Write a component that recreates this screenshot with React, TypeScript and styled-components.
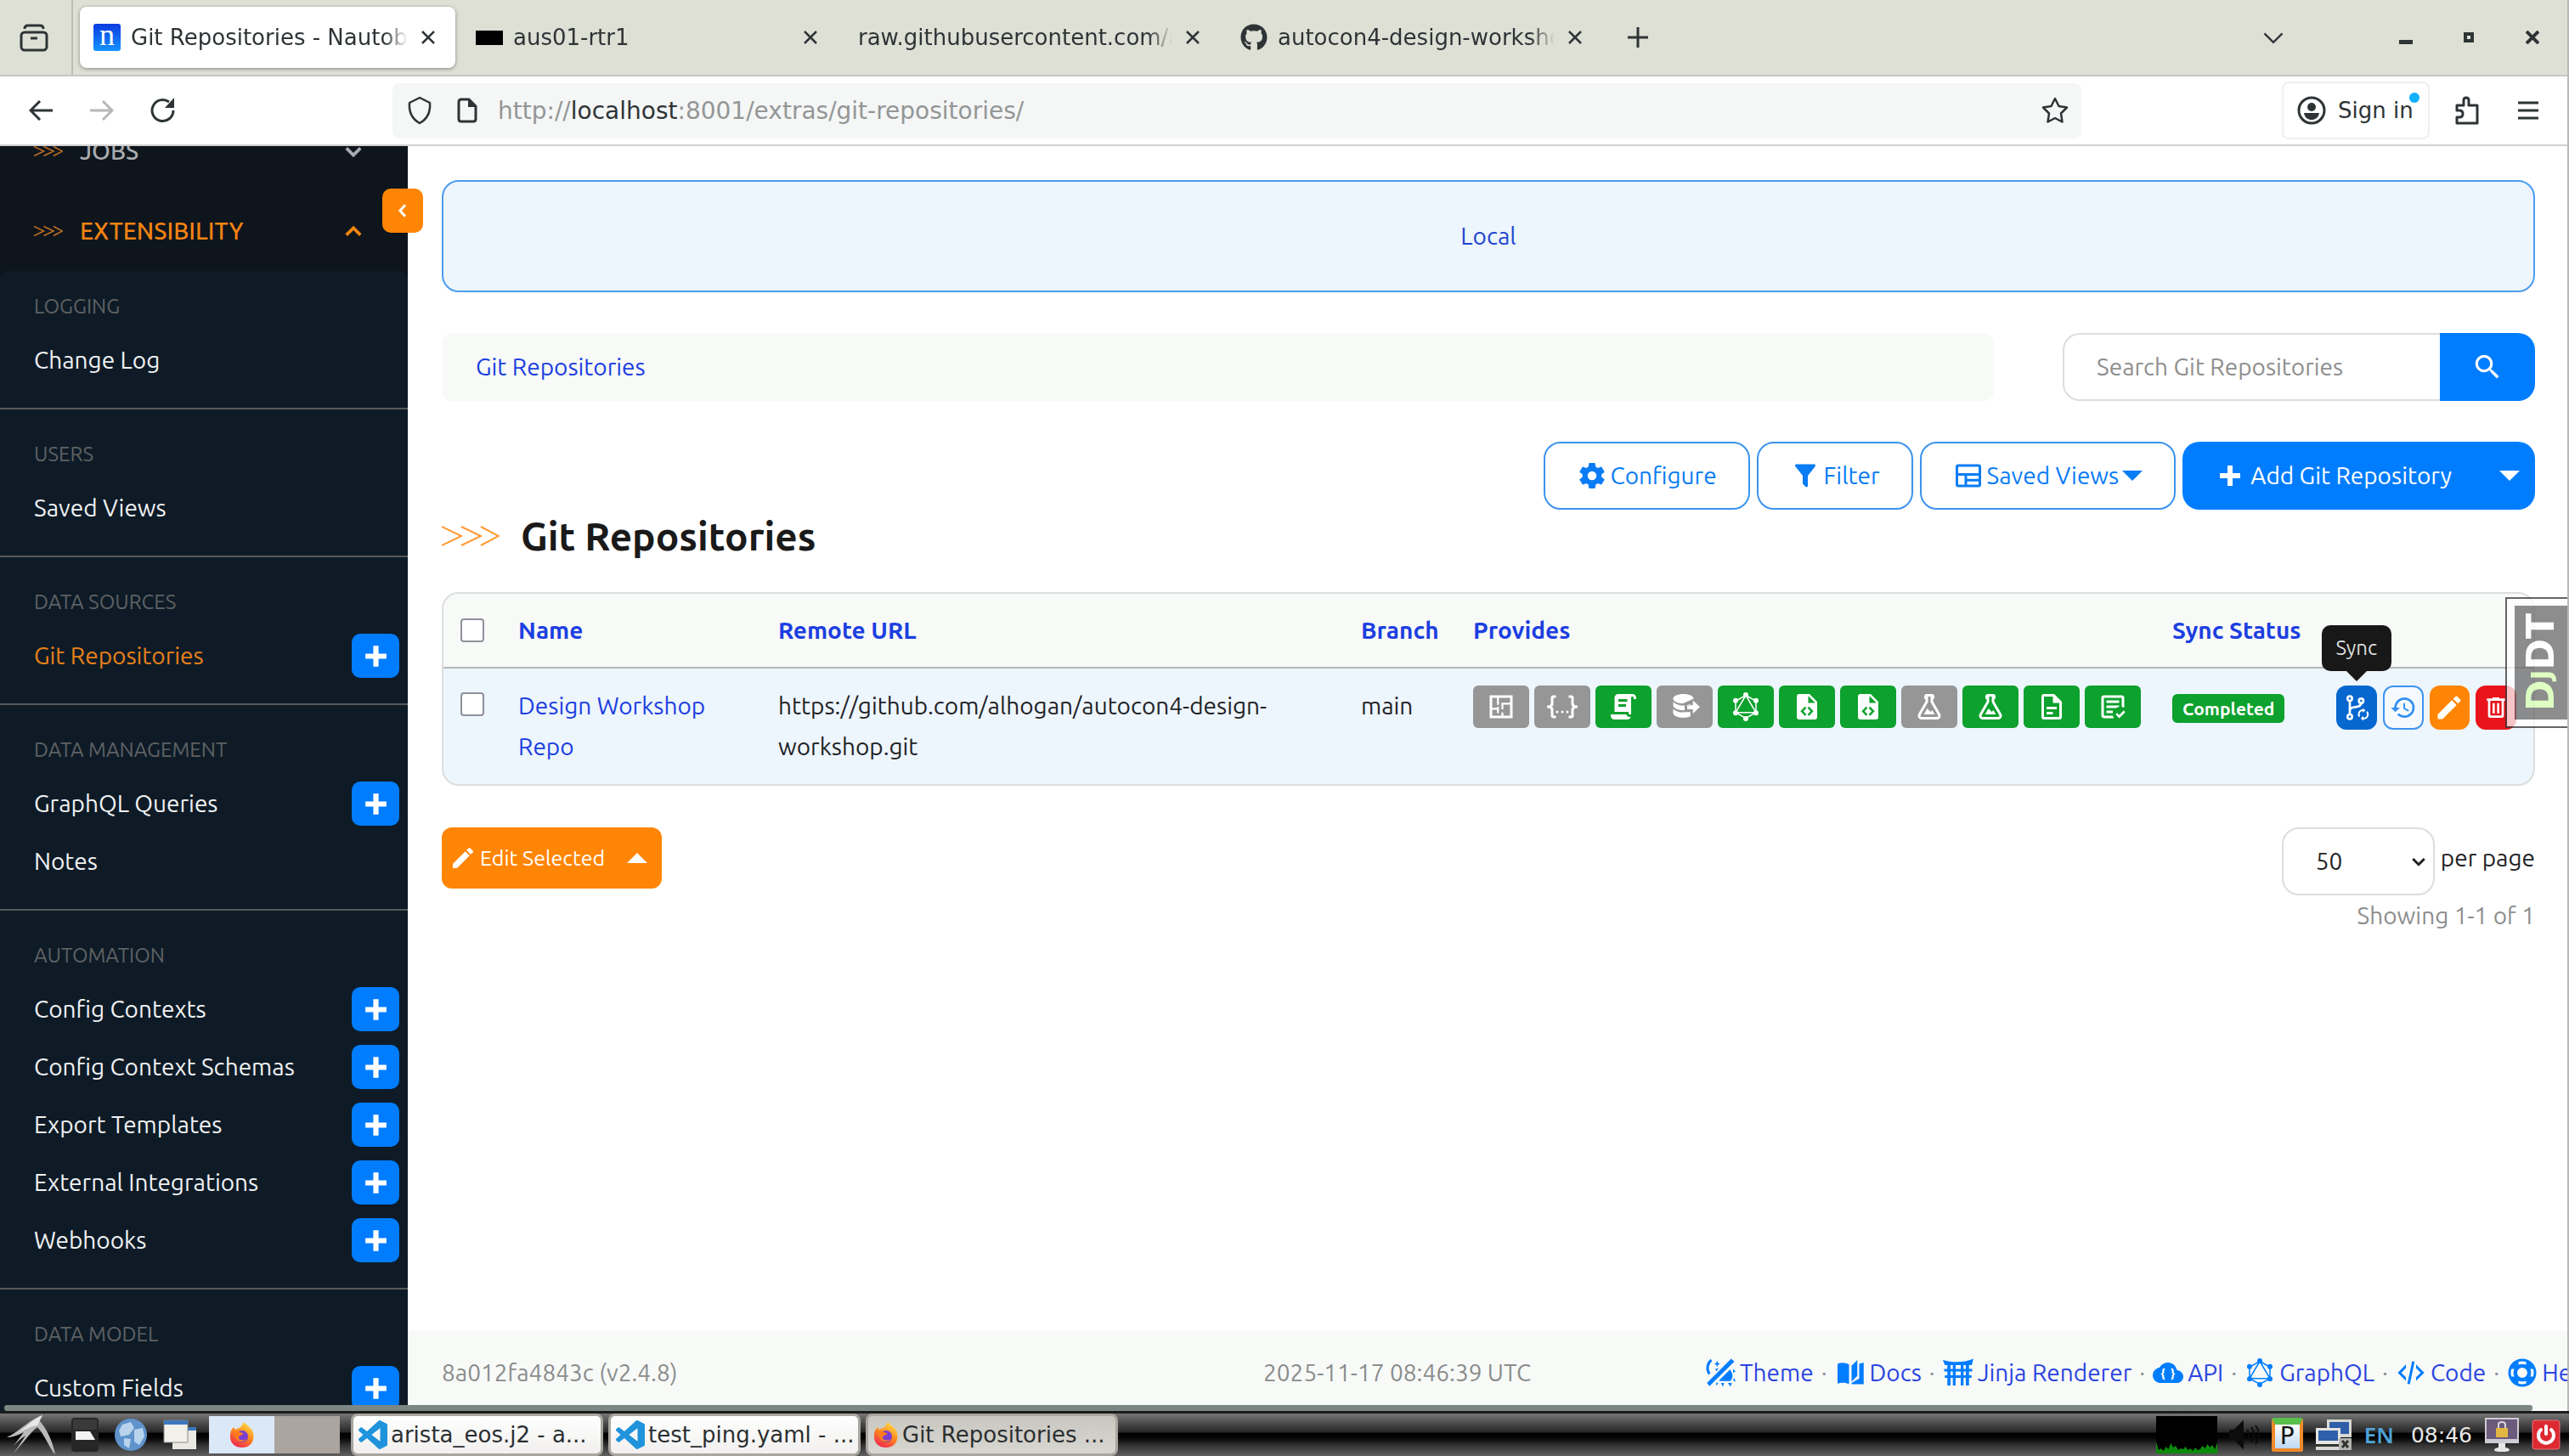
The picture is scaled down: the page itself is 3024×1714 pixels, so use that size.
import React from 'react';
import styled, { createGlobalStyle } from 'styled-components';
import { FaGithub } from 'react-icons/fa';

const PAGE_FONT = '"Ubuntu", "Noto Sans", sans-serif';
const CHROME_FONT = '"DejaVu Sans", sans-serif';

const GlobalStyle = createGlobalStyle`
  *, *::before, *::after { box-sizing: border-box; }
  body { margin: 0; background: #fff; overflow: hidden; }
  button, input, select { font: inherit; color: inherit; margin: 0; }
  button { border: 0; background: none; padding: 0; cursor: pointer; }
  a { color: inherit; text-decoration: none; }
  svg { display: block; flex: none; }
`;

/* ---------- shared icon ---------- */

const mdi = {
  cog: 'M12,15.5A3.5,3.5 0 0,1 8.5,12A3.5,3.5 0 0,1 12,8.5A3.5,3.5 0 0,1 15.5,12A3.5,3.5 0 0,1 12,15.5M19.43,12.97C19.47,12.65 19.5,12.33 19.5,12C19.5,11.67 19.47,11.34 19.43,11L21.54,9.37C21.73,9.22 21.78,8.95 21.66,8.73L19.66,5.27C19.54,5.05 19.27,4.96 19.05,5.05L16.56,6.05C16.04,5.66 15.5,5.32 14.87,5.07L14.5,2.42C14.46,2.18 14.25,2 14,2H10C9.75,2 9.54,2.18 9.5,2.42L9.13,5.07C8.5,5.32 7.96,5.66 7.44,6.05L4.95,5.05C4.73,4.96 4.46,5.05 4.34,5.27L2.34,8.73C2.21,8.95 2.27,9.22 2.46,9.37L4.57,11C4.53,11.34 4.5,11.67 4.5,12C4.5,12.33 4.53,12.65 4.57,12.97L2.46,14.63C2.27,14.78 2.21,15.05 2.34,15.27L4.34,18.73C4.46,18.95 4.73,19.03 4.95,18.95L7.44,17.94C7.96,18.34 8.5,18.68 9.13,18.93L9.5,21.58C9.54,21.82 9.75,22 10,22H14C14.25,22 14.46,21.82 14.5,21.58L14.87,18.93C15.5,18.67 16.04,18.34 16.56,17.94L19.05,18.95C19.27,19.03 19.54,18.95 19.66,18.73L21.66,15.27C21.78,15.05 21.73,14.78 21.54,14.63L19.43,12.97Z',
  filter: 'M14,12V19.88C14.04,20.18 13.94,20.5 13.71,20.71C13.32,21.1 12.69,21.1 12.3,20.71L10.29,18.7C10.06,18.47 9.96,18.16 10,17.87V12H9.97L4.21,4.62C3.87,4.19 3.95,3.56 4.38,3.22C4.57,3.08 4.78,3 5,3V3H19V3C19.22,3 19.43,3.08 19.62,3.22C20.05,3.56 20.13,4.19 19.79,4.62L14.03,12H14Z',
  savedViews: 'M4,3H20A2,2 0 0,1 22,5V19A2,2 0 0,1 20,21H4A2,2 0 0,1 2,19V5A2,2 0 0,1 4,3M4,5V10H20V5H4M4,12V19H9V12H4M11,12V14.5H20V12H11M11,16.5V19H20V16.5H11Z',
  pencil: 'M20.71,7.04C21.1,6.65 21.1,6 20.71,5.63L18.37,3.29C18,2.9 17.35,2.9 16.96,3.29L15.12,5.12L18.87,8.87M3,17.25V21H6.75L17.81,9.93L14.06,6.18L3,17.25Z',
  magnify: 'M9.5,3A6.5,6.5 0 0,1 16,9.5C16,11.11 15.41,12.59 14.44,13.73L14.71,14H15.5L20.5,19L19,20.5L14,15.5V14.71L13.73,14.44C12.59,15.41 11.11,16 9.5,16A6.5,6.5 0 0,1 3,9.5A6.5,6.5 0 0,1 9.5,3M9.5,5C7,5 5,7 5,9.5C5,12 7,14 9.5,14C12,14 14,12 14,9.5C14,7 12,5 9.5,5Z',
  plus: 'M20 14H14V20H10V14H4V10H10V4H14V10H20V14Z',
  history: 'M13.5,8H12V13L16.28,15.54L17,14.33L13.5,12.25V8M13,3A9,9 0 0,0 4,12H1L4.96,16.03L9,12H6A7,7 0 0,1 13,5A7,7 0 0,1 20,12A7,7 0 0,1 13,19C11.07,19 9.32,18.21 8.06,16.94L6.64,18.36C8.27,20 10.5,21 13,21A9,9 0 0,0 22,12A9,9 0 0,0 13,3',
  trash: 'M9,3V4H4V6H5V19A2,2 0 0,0 7,21H17A2,2 0 0,0 19,19V6H20V4H15V3H9M7,6H17V19H7V6M9,8V17H11V8H9M13,8V17H15V8H13Z',
  document: 'M6,2A2,2 0 0,0 4,4V20A2,2 0 0,0 6,22H18A2,2 0 0,0 20,20V8L14,2H6M6,4H13V9H18V20H6V4M8,12V14H16V12H8M8,16V18H13V16H8Z',
  flask: 'M5,19A1,1 0 0,0 6,20H18A1,1 0 0,0 19,19C19,18.79 18.93,18.59 18.82,18.43L13,8.35V4H11V8.35L5.18,18.43C5.07,18.59 5,18.79 5,19M6,22A3,3 0 0,1 3,19C3,18.4 3.18,17.84 3.5,17.37L9,7.81V6A1,1 0 0,1 8,5V4A2,2 0 0,1 10,2H14A2,2 0 0,1 16,4V5A1,1 0 0,1 15,6V7.81L20.5,17.37C20.82,17.84 21,18.4 21,19A3,3 0 0,1 18,22H6M13,16L14.34,14.66L16.27,18H7.73L10.39,13.39L13,16Z',
  script: 'M17.8,20C17.4,21.2 16.3,22 15,22H5C3.3,22 2,20.7 2,19V18H5L14.2,18C14.6,19.2 15.7,20 17,20H17.8M19,2C20.7,2 22,3.3 22,5V6H20V5C20,4.4 19.6,4 19,4C18.4,4 18,4.4 18,5V18H17C16.4,18 16,17.6 16,17V16H5V5C5,3.3 6.3,2 8,2H19M8,6V8H15V6H8M8,10V12H14V10H8Z',
  json: 'M5,3H7V5H5V10A2,2 0 0,1 3,12A2,2 0 0,1 5,14V19H7V21H5C3.93,20.73 3,20.1 3,19V15A2,2 0 0,0 1,13H0V11H1A2,2 0 0,0 3,9V5A2,2 0 0,1 5,3M19,3A2,2 0 0,1 21,5V9A2,2 0 0,0 23,11H24V13H23A2,2 0 0,0 21,15V19A2,2 0 0,1 19,21H17V19H19V14A2,2 0 0,1 21,12A2,2 0 0,1 19,10V5H17V3H19M12,15A1,1 0 0,1 13,16A1,1 0 0,1 12,17A1,1 0 0,1 11,16A1,1 0 0,1 12,15M8,15A1,1 0 0,1 9,16A1,1 0 0,1 8,17A1,1 0 0,1 7,16A1,1 0 0,1 8,15M16,15A1,1 0 0,1 17,16A1,1 0 0,1 16,17A1,1 0 0,1 15,16A1,1 0 0,1 16,15Z',
  fileCode: 'M6,2H14L20,8V20A2,2 0 0,1 18,22H6A2,2 0 0,1 4,20V4A2,2 0 0,1 6,2M13,3.5V9H18.5L13,3.5M10.4,11.8L6.9,15.5L10.4,19.2L11.6,18L9.2,15.5L11.6,13L10.4,11.8M13.6,11.8L12.4,13L14.8,15.5L12.4,18L13.6,19.2L17.1,15.5L13.6,11.8Z',
  textCheck: 'M17,21L14.25,18L15.41,16.84L17,18.43L20.59,14.84L21.75,16.25M12.8,21H5C3.89,21 3,20.11 3,19V5C3,3.89 3.89,3 5,3H19C20.11,3 21,3.89 21,5V12.8C20.39,12.45 19.72,12.2 19,12.08V5H5V19H12.08C12.2,19.72 12.45,20.39 12.8,21M12,17H7V15H12M14.68,13H7V11H17V12.08C16.15,12.22 15.37,12.54 14.68,13M17,9H7V7H17',
  xml: 'M12.89,3L14.85,3.4L11.11,21L9.15,20.6L12.89,3M19.59,12L16,8.41V5.58L22.42,12L16,18.41V15.58L19.59,12M1.58,12L8,5.58V8.41L4.41,12L8,15.58V18.41L1.58,12Z',
  databaseExport: 'M11,2C15.4,2 19,3.6 19,5.6L11,9.4C6.6,9.4 3,7.7 3,5.6C3,3.6 6.6,2 11,2M3,8.2C4.6,10 7.5,11 11,11C13,11 15,10.6 16.5,10V11H12V14.6C11.7,14.8 11.3,14.8 11,14.8C6.600,14.8 3,13 3,11V8.2M3,13.600C4.600,15.4 7.500,16.4 11,16.4L13,16.2H16.500V19.500C15,20.2 13,20.6 11,20.600C6.600,20.600 3,19 3,17V13.600M18.500,7L24,12.200L18.500,17.400V14H14V10.600H18.500V7Z',
  book: 'M2,5C5,3.600 8.500,4 11,5.500V21C8.500,19.500 5,19.500 2,20.500V5M13,6.500L17.500,2V14.500L13,19V6.500M19,5L22.500,4V21H13V20L19,16.500V5Z',
  torii: 'M0,2C8,4.200 16,4.200 24,1L22.600,6H20.500V9H23V11H20.500V14H22.500V16H20.500V22H18V16H16.200V22H14V16H10V22H7.800V16H6V22H3.500V16H1.500V14H3.500V11H1V9H3.500V6H1.500L0,2M6,6V9H7.800V6H6M10,6V9H14V6H10M16.200,6V9H18V6H16.200M6,11V14H7.800V11H6M10,11V14H14V11H10M16.200,11V14H18V11H16.200Z',
  cloud: 'M12,4C15.600,4 18.500,6.600 19,10C21.800,10.200 24,12.400 24,15.100C24,17.800 21.700,20 19,20H6C2.700,20 0,17.300 0,14C0,11 2.300,8.400 5.300,8C6.600,5.600 9.100,4 12,4M9.500,8.500C7.700,8.500 7.500,9.500 7.500,10.800C7.500,12 7.300,12.500 6,13C7.300,13.500 7.500,14 7.500,15.200C7.500,16.600 7.800,17.600 9.500,17.600V16.300C8.800,16.200 9,15.600 9,14.800C9,13.800 8.700,13.300 8,13C8.700,12.700 9,12.200 9,11.200C9,10.400 8.800,9.900 9.500,9.800V8.500M14.500,8.500V9.800C15.200,9.900 15,10.400 15,11.200C15,12.200 15.300,12.700 16,13C15.300,13.300 15,13.800 15,14.800C15,15.600 15.200,16.200 14.500,16.300V17.600C16.200,17.600 16.500,16.600 16.500,15.200C16.500,14 16.700,13.500 18,13C16.700,12.500 16.500,12 16.500,10.800C16.500,9.500 16.300,8.500 14.500,8.500Z',
  lifebuoy: 'M12,1A11,11 0 0,1 23,12A11,11 0 0,1 12,23A11,11 0 0,1 1,12A11,11 0 0,1 12,1M12,8A4,4 0 0,0 8,12A4,4 0 0,0 12,16A4,4 0 0,0 16,12A4,4 0 0,0 12,8M9,3.500V5.700C10.900,4.900 13.100,4.900 15,5.700V3.500C13.100,2.800 10.900,2.800 9,3.500M9,20.500C10.900,21.200 13.100,21.200 15,20.500V18.300C13.100,19.100 10.900,19.100 9,18.300V20.500M3.500,9C2.800,10.900 2.800,13.100 3.500,15H5.700C4.900,13.100 4.900,10.900 5.700,9H3.500M20.500,9H18.300C19.100,10.900 19.100,13.100 18.300,15H20.500C21.200,13.100 21.200,10.900 20.500,9Z',
};

type IconName = keyof typeof mdi | 'graphql' | 'branchSync' | 'theme' | 'floorPlan';

function Icon({ name, size = 32 }: { name: IconName; size?: number }) {
  if (name === 'graphql') {
    return (
      <svg width={size} height={size} viewBox="0 0 24 24" fill="currentColor" aria-hidden="true">
        <path d="M12 3 20 7.500V16.500L12 21 4 16.500V7.500ZM12 3 20 16.500H4Z" fill="none" stroke="currentColor" strokeWidth="1" />
        {[[12, 2.600], [20, 7.200], [20, 16.800], [12, 21.400], [4, 16.800], [4, 7.200]].map(([x, y]) => (
          <circle key={`${x}-${y}`} cx={x} cy={y} r="2" />
        ))}
      </svg>
    );
  }
  if (name === 'floorPlan') {
    return (
      <svg width={size} height={size} viewBox="0 0 24 24" fill="none" stroke="currentColor" aria-hidden="true">
        <path d="M4 4H20V20H4Z" strokeWidth="2" />
        <path d="M9.500 4V10.500M4 13.500H9.500V17M9.500 12V13.500M13 20V16.500M13 14V9.500H20" strokeWidth="1.500" />
      </svg>
    );
  }
  if (name === 'branchSync') {
    return (
      <svg width={size} height={size} viewBox="0 0 24 24" fill="none" stroke="currentColor" strokeWidth="2" aria-hidden="true">
        <circle cx="6" cy="4" r="2" />
        <circle cx="6" cy="20" r="2" />
        <circle cx="16" cy="6" r="2" />
        <path d="M6 6V18M6 15C6 12 8 12 11 11.500S16 10.500 16 8" />
        <path d="M14.500 20A3.800 3.800 0 0 1 16 14.500H18M21 15.500A3.800 3.800 0 0 1 19.500 21.500H17.500" strokeWidth="1.500" />
        <path d="M17.500 12.300V16.500L19.800 14.400ZM18 19.400V23.600L15.700 21.500Z" fill="currentColor" stroke="none" />
      </svg>
    );
  }
  if (name === 'theme') {
    return (
      <svg width={size} height={size} viewBox="0 0 24 24" fill="currentColor" aria-hidden="true">
        <path d="M20.500 1 23 3.200 3.500 22.500 1.500 20Z" />
        <path d="M5 2A8 8 0 0 0 3.500 13" fill="none" stroke="currentColor" strokeWidth="2" />
        <path d="M9.500 2.500 10.200 4.400 12 5 10.200 5.600 9.500 7.500 8.800 5.600 7 5 8.800 4.400ZM8 9 10.500 8.500 9 11Z" />
        <path d="M19.500 9.500A6.500 6.500 0 0 1 20 18.500H11A7 7 0 0 1 11.500 17.500ZM22 9l2 2-2 1ZM23 16l1 3-2-1ZM12.500 20H15l-1 3ZM18 20h3l-1 3ZM9 19.500l1.500 1-2 1.500Z" />
      </svg>
    );
  }
  return (
    <svg width={size} height={size} viewBox="0 0 24 24" fill="currentColor" fillRule="evenodd" aria-hidden="true">
      <path d={mdi[name]} />
    </svg>
  );
}

function Chevron({ dir, size = 22, weight = 4 }: { dir: 'up' | 'down' | 'left'; size?: number; weight?: number }) {
  const d = { up: 'M3 17 12 8 21 17', down: 'M3 8 12 17 21 8', left: 'M16 3 8 12 16 21' }[dir];
  return (
    <svg width={size} height={size} viewBox="0 0 24 24" fill="none" stroke="currentColor" strokeWidth={weight} aria-hidden="true">
      <path d={d} />
    </svg>
  );
}

function Caret({ up = false }: { up?: boolean }) {
  return (
    <svg width="24" height="14" viewBox="0 0 24 14" fill="currentColor" aria-hidden="true">
      <path d={up ? 'M0 13 12 1 24 13Z' : 'M0 1 12 13 24 1Z'} />
    </svg>
  );
}

function TripleArrow({ width, height, weight }: { width: number; height: number; weight: number }) {
  return (
    <svg width={width} height={height} viewBox="0 0 68 26" fill="none" stroke="currentColor" strokeWidth={weight} aria-hidden="true">
      <path d="M0 2 23 13 0 24M23 2 46 13 23 24M46 2 67 13 46 24" />
    </svg>
  );
}

/* ---------- desktop and browser frame ---------- */

const Desktop = styled.div`
  display: flex;
  flex-direction: column;
  height: 100vh;
  overflow: hidden;
`;

const Browser = styled.div`
  flex: 1;
  min-height: 0;
  display: flex;
  flex-direction: column;
  background: #fff;
  border-right: 2px solid #b8b8b8;
  font-family: ${CHROME_FONT};
  color: #2e3436;
`;

const TabStrip = styled.div`
  display: flex;
  align-items: center;
  height: 90px;
  background: #dedfd5;
  border-bottom: 2px solid #c6c7c2;
`;

const FirefoxView = styled.button`
  display: grid;
  place-items: center;
  width: 86px;
  height: 88px;
  padding-right: 4px;
  border-right: 2px solid #bcbdb6;
`;

const Tabs = styled.div`
  display: flex;
  gap: 8px;
  padding-left: 8px;
`;

const Tab = styled.div<{ $active?: boolean }>`
  display: flex;
  align-items: center;
  gap: 12px;
  width: 442px;
  height: 72px;
  padding: 0 20px 0 16px;
  border-radius: 8px;
  font-size: 26px;
  background: ${(p) => (p.$active ? '#fff' : 'transparent')};
  box-shadow: ${(p) => (p.$active ? '0 1px 4px rgba(0, 0, 0, 0.4)' : 'none')};
`;

const TabTitle = styled.span`
  flex: 1;
  min-width: 0;
  overflow: hidden;
  white-space: nowrap;
  line-height: 36px;
  mask-image: linear-gradient(to right, #000 calc(100% - 28px), transparent);
`;

const NautobotFavicon = styled.span`
  width: 32px;
  height: 32px;
  border-radius: 3px;
  background: linear-gradient(#0b3be0, #1593ff);
  color: #fff;
  font: 36px/26px "Liberation Serif", serif;
  text-align: center;
`;

const BlackFavicon = styled.span`
  width: 32px;
  height: 17px;
  background: #000;
`;

const IconButton = styled.button<{ $w?: number; $dim?: boolean }>`
  display: grid;
  place-items: center;
  flex: none;
  width: ${(p) => p.$w ?? 24}px;
  height: 40px;
  opacity: ${(p) => (p.$dim ? 0.35 : 1)};
`;

const WindowControls = styled.div`
  display: flex;
  align-items: center;
  margin-left: auto;
`;

const NavBar = styled.div`
  display: flex;
  align-items: center;
  height: 82px;
  padding: 0 18px 0 12px;
  border-bottom: 2px solid #d0d0d0;
`;

const AddressBar = styled.div`
  display: flex;
  align-items: center;
  flex: 1;
  max-width: 1988px;
  height: 65px;
  margin-left: 234px;
  padding: 0 14px 0 10px;
  border-radius: 8px;
  background: #f5f6f6;
  font-size: 28px;
`;

const Url = styled.a`
  flex: 1;
  margin-left: 2px;
  color: #949696;
  b { font-weight: 400; color: #2e3436; }
`;

const NavRight = styled.div`
  display: flex;
  align-items: center;
  margin-left: auto;
  gap: 16px;
`;

const SignIn = styled.button`
  position: relative;
  display: flex;
  align-items: center;
  gap: 14px;
  width: 174px;
  height: 68px;
  padding-left: 16px;
  border: 2px solid #f3eef0;
  border-radius: 8px;
  font-size: 26px;
`;

const Dot = styled.span`
  position: absolute;
  top: 11px;
  right: 10px;
  width: 12px;
  height: 12px;
  border-radius: 50%;
  background: #10b0fb;
`;

const Page = styled.div`
  position: relative;
  flex: 1;
  min-height: 0;
  display: flex;
  overflow: hidden;
  font-family: ${PAGE_FONT};
  font-size: 28px;
  line-height: 48px;
  color: #1f2326;
`;

const HorizontalScrollbar = styled.div`
  position: absolute;
  left: 5px;
  right: 41px;
  bottom: 0;
  height: 7px;
  border-radius: 3px;
  background: #7b8784;
`;

/* ---------- sidebar ---------- */

const SidebarShell = styled.aside`
  position: relative;
  flex: none;
  width: 480px;
`;

const SidebarScroll = styled.nav`
  height: 100%;
  overflow: hidden;
  background: #0f151d;
  white-space: nowrap;
`;

const SidebarMenus = styled.div`
  margin-top: -41px;
`;

const MenuButton = styled.button<{ $active?: boolean }>`
  display: flex;
  align-items: center;
  gap: 20px;
  width: 100%;
  height: 94px;
  padding: 0 53px 0 40px;
  font-weight: 500;
  color: ${(p) => (p.$active ? '#f28412' : '#a9adb0')};
  svg:first-child { color: #c27122; }
  svg:last-child { margin-left: auto; }
`;

const MenuPanel = styled.div`
  border-radius: 10px 10px 0 0;
  background: #0e1b27;
`;

const MenuGroup = styled.section`
  padding: 24px 10px 22px 40px;
  border-bottom: 2px solid #56595c;
  &:first-child { padding-top: 13px; }
`;

const GroupTitle = styled.h2`
  margin: 0;
  font-size: 24px;
  line-height: 58px;
  font-weight: 400;
  color: #5e6163;
`;

const MenuItem = styled.div<{ $active?: boolean }>`
  display: flex;
  align-items: center;
  justify-content: space-between;
  height: 68px;
  color: ${(p) => (p.$active ? '#e8801a' : '#f0f1f2')};
`;

const AddButton = styled.button`
  display: grid;
  place-items: center;
  width: 56px;
  height: 52px;
  border-radius: 10px;
  background: #007dff;
  color: #fff;
`;

const CollapseButton = styled.button`
  position: absolute;
  top: 50px;
  right: -18px;
  display: grid;
  place-items: center;
  width: 48px;
  height: 52px;
  border-radius: 10px;
  background: #ff8504;
  color: #fff;
`;

/* ---------- main column ---------- */

const Main = styled.main`
  flex: 1;
  min-width: 0;
  display: flex;
  flex-direction: column;
  overflow: hidden;
`;

const Content = styled.div`
  flex: 1;
  padding: 40px 38px 0 40px;
`;

const Banner = styled.div`
  display: grid;
  place-items: center;
  height: 132px;
  border: 2px solid #4b9df0;
  border-radius: 20px;
  background: #edf5fd;
  color: #1f45d0;
`;

const SearchRow = styled.div`
  display: flex;
  gap: 81px;
  margin-top: 48px;
`;

const Breadcrumb = styled.nav`
  flex: 1;
  padding: 16px 40px;
  border-radius: 12px;
  background: #f8faf8;
  color: #1c3fe0;
`;

const SearchForm = styled.form`
  display: flex;
  width: 556px;
  height: 80px;
`;

const SearchInput = styled.input`
  flex: 1;
  min-width: 0;
  padding: 0 38px;
  border: 2px solid #dcdddc;
  border-right: 0;
  border-radius: 20px 0 0 20px;
  background: #fff;
  &::placeholder { color: #8e8e8e; opacity: 1; }
`;

const SearchButton = styled.button`
  display: grid;
  place-items: center;
  width: 112px;
  border-radius: 0 20px 20px 0;
  background: #007dff;
  color: #fff;
`;

const ActionBar = styled.div`
  display: flex;
  justify-content: flex-end;
  gap: 8px;
  margin-top: 48px;
`;

const OutlineButton = styled.button`
  display: flex;
  align-items: center;
  gap: 4px;
  height: 80px;
  padding: 0 37px;
  border: 2px solid #3d93ee;
  border-radius: 20px;
  background: #fff;
  color: #0a7cf5;
`;

const SplitButton = styled.div`
  display: flex;
  height: 80px;
  border-radius: 20px;
  background: #007dff;
  color: #fff;
`;

const SplitMain = styled.button`
  display: flex;
  align-items: center;
  gap: 6px;
  padding: 0 38px;
`;

const SplitToggle = styled.button`
  display: grid;
  place-items: center;
  width: 60px;
`;

const TitleRow = styled.div`
  display: flex;
  align-items: center;
  gap: 25px;
  height: 62px;
  margin-bottom: 35px;
  color: #ff9a35;
`;

const Title = styled.h1`
  margin: 0;
  font-size: 46px;
  font-weight: 600;
  line-height: 62px;
  color: #1a1a1a;
`;

const TableCard = styled.div`
  border: 2px solid #dcdedd;
  border-radius: 20px;
  background: #edf5fd;
`;

const Table = styled.table`
  width: 100%;
  table-layout: fixed;
  border-collapse: separate;
  border-spacing: 0;
  text-align: left;
  th {
    height: 88px;
    padding: 19px 20px;
    border-bottom: 2px solid #b4b6b7;
    background: #f8faf8;
    color: #1c3fe0;
    font-weight: 700;
  }
  th:first-child { border-top-left-radius: 18px; }
  th:last-child { border-top-right-radius: 18px; }
  td { padding: 20px; vertical-align: top; }
  th:first-child, td:first-child { padding-right: 0; }
`;

const Col = styled.col<{ $w?: number }>`
  width: ${(p) => (p.$w ? `${p.$w}px` : 'auto')};
`;

const Checkbox = styled.input.attrs({ type: 'checkbox' })`
  display: block;
  appearance: none;
  width: 28px;
  height: 28px;
  margin: 8px 0;
  border: 2px solid #8f8f9d;
  border-radius: 4px;
  background: #fff;
`;

const RepoLink = styled.a`
  color: #1c3fe0;
`;

const IconRow = styled.div<{ $gap: number }>`
  display: flex;
  gap: ${(p) => p.$gap}px;
`;

const ProvidesBadge = styled.span<{ $on: boolean }>`
  display: grid;
  place-items: center;
  flex: none;
  width: 66px;
  height: 50px;
  border-radius: 6px;
  background: ${(p) => (p.$on ? '#0da12d' : '#969696')};
  color: #fff;
`;

const StatusBadge = styled.span`
  display: inline-block;
  margin-top: 10px;
  padding: 0 12px;
  border-radius: 6px;
  background: #0da12d;
  color: #fff;
  font-size: 21px;
  font-weight: 700;
  line-height: 34px;
  vertical-align: top;
`;

const RowAction = styled.button<{ $bg: string; $fg?: string; $border?: string }>`
  position: relative;
  display: grid;
  place-items: center;
  width: 48px;
  height: 52px;
  border: 2px solid ${(p) => p.$border ?? p.$bg};
  border-radius: 12px;
  background: ${(p) => p.$bg};
  color: ${(p) => p.$fg ?? '#fff'};
`;

const Tooltip = styled.span`
  position: absolute;
  bottom: 67px;
  left: 50%;
  width: 82px;
  margin-left: -41px;
  border-radius: 10px;
  background: #181818;
  color: #dedede;
  font-size: 24px;
  line-height: 54px;
  &::after {
    content: '';
    position: absolute;
    top: 100%;
    left: 50%;
    margin-left: -12px;
    border: 12px solid transparent;
    border-top-color: #181818;
    border-bottom: 0;
  }
`;

const BelowTable = styled.div`
  display: flex;
  justify-content: space-between;
  align-items: flex-start;
  margin-top: 49px;
`;

const EditSelected = styled.button`
  display: flex;
  align-items: center;
  height: 72px;
  padding: 0 17px 0 9px;
  border-radius: 12px;
  background: #ff8504;
  color: #fff;
  font-size: 25px;
  svg:first-child { margin-right: 4px; }
  svg:last-child { margin-left: 26px; }
`;

const Paging = styled.div`
  text-align: right;
`;

const PageSizeLabel = styled.label`
  display: flex;
  gap: 7px;
  height: 80px;
  line-height: 72px;
`;

const SelectBox = styled.span`
  display: grid;
  align-items: center;
  > * { grid-area: 1 / 1; }
  svg { justify-self: end; margin-right: 10px; pointer-events: none; }
`;

const PageSize = styled.select`
  appearance: none;
  width: 180px;
  height: 80px;
  padding: 0 38px;
  border: 2px solid #dcdddc;
  border-radius: 20px;
  background: #fff;
`;

const Muted = styled.p`
  margin: 0;
  color: #8c8e8e;
`;

const Footer = styled.footer`
  display: grid;
  grid-template-columns: minmax(0, 967fr) minmax(0, 520fr) minmax(0, 977fr);
  flex: none;
  padding: 26px 38px 21px 40px;
  background: #f8faf8;
  color: #8a8c8c;
  white-space: nowrap;
`;

const FooterLinks = styled.div`
  display: flex;
  gap: 9px;
`;

const FooterLink = styled.a`
  display: flex;
  align-items: center;
  gap: 5px;
  flex: none;
  color: #2a45e0;
  svg { color: #007dff; }
`;

const DebugHandle = styled.div`
  position: absolute;
  top: 531px;
  right: 0;
  width: 73px;
  padding: 8px 0 8px 9px;
  border: 2px solid #333;
  border-right: 0;
  background: #fff;
  opacity: 0.75;
`;

const DebugButton = styled.button`
  display: block;
  width: 100%;
  height: 134px;
  background: #686868;
  color: #fff;
  font: 700 44px/62px ${CHROME_FONT};
  writing-mode: vertical-rl;
  transform: rotate(180deg);
  text-align: center;
  span { color: #d6ffb0; }
  small { color: #d6ffb0; font-size: 32px; }
`;

/* ---------- taskbar ---------- */

const TaskBar = styled.footer`
  display: flex;
  align-items: center;
  flex: none;
  height: 53px;
  border-top: 3px solid #1c1c1c;
  background: linear-gradient(#777 0, #474747 25%, #272727 44%, #000 46%, #060606 58%, #333 75%, #606060 100%);
  font-family: ${CHROME_FONT};
  font-size: 26px;
  color: #2b2f31;
`;

const Launchers = styled.div`
  display: flex;
  align-items: center;
  gap: 18px;
  width: 246px;
  padding-left: 8px;
`;

const Workspace = styled.button<{ $active?: boolean }>`
  display: grid;
  place-items: center;
  width: 77px;
  height: 44px;
  background: ${(p) => (p.$active ? '#dbe8f7' : '#aba49f')};
`;

const Tasks = styled.div`
  display: flex;
  gap: 6px;
  margin-left: 13px;
`;

const Task = styled.button<{ $active?: boolean }>`
  display: flex;
  align-items: center;
  gap: 4px;
  width: 297px;
  height: 50px;
  padding: 0 6px;
  border: 3px solid #a9a6a0;
  border-radius: 8px;
  background: ${(p) => (p.$active ? 'linear-gradient(#c9c7c1, #d8d6d0)' : 'linear-gradient(#fff, #f1f0ee)')};
  white-space: nowrap;
`;

const Tray = styled.div`
  display: flex;
  align-items: center;
  gap: 14px;
  margin-left: auto;
  padding-right: 10px;
`;

const Language = styled.span`
  color: #4fa3d8;
  font-family: "Noto Sans", sans-serif;
  font-weight: 600;
`;

const Clock = styled.time`
  margin-left: 6px;
  color: #e8e8e8;
  font-size: 25px;
`;

const ClipboardIcon = styled.span`
  width: 37px;
  height: 40px;
  border: 4px solid #ee8a2a;
  border-top: 8px solid #58c04a;
  border-radius: 3px;
  background: linear-gradient(#fff, #bcd8f2);
  color: #111;
  font-size: 28px;
  line-height: 28px;
  text-align: center;
`;

/* ---------- drawings for the frame ---------- */

const CloseGlyph = ({ size = 16, weight = 2.5 }: { size?: number; weight?: number }) => (
  <svg width={size} height={size} viewBox="0 0 16 16" stroke="currentColor" strokeWidth={weight} aria-hidden="true">
    <path d="M1 1 15 15M15 1 1 15" />
  </svg>
);

const Firefox = () => (
  <svg width="30" height="32" viewBox="0 0 30 32" aria-hidden="true">
    <defs>
      <linearGradient id="fx" x1="0.8" y1="0" x2="0.3" y2="1">
        <stop offset="0" stopColor="#ffe14a" />
        <stop offset="0.5" stopColor="#ff8a1e" />
        <stop offset="1" stopColor="#f0264f" />
      </linearGradient>
    </defs>
    <path d="M17 1C20 4 22 5 24 8 25 8 26 9 27 11 31 20 27 31 15 31 6 31 0 25 1 16 1 12 3 9 5 7L7 10C10 8 13 8 14 6Z" fill="url(#fx)" />
    <circle cx="15" cy="18" r="7" fill="#7a3fd0" />
    <path d="M6 13C10 11 14 13 17 15 14 16 14 17 11 18 10 22 16 24 20 21 16 27 6 25 6 13Z" fill="#ff7a20" />
  </svg>
);

const VsCode = () => (
  <svg width="34" height="34" viewBox="0 0 24 24" fill="#1f93dc" aria-hidden="true">
    <path d="M23.150 2.587L18.210.210a1.494 1.494 0 0 0-1.705.290l-9.460 8.630-4.120-3.128a.999.999 0 0 0-1.276.057L.327 7.261A1 1 0 0 0 .326 8.740L3.899 12 .326 15.260a1 1 0 0 0 .001 1.479L1.650 17.940a.999.999 0 0 0 1.276.057l4.120-3.128 9.460 8.630a1.492 1.492 0 0 0 1.704.290l4.942-2.377A1.500 1.500 0 0 0 24 20.060V3.939a1.500 1.500 0 0 0-.850-1.352zm-5.146 14.861L10.826 12l7.178-5.448v10.896z" />
  </svg>
);

const LoadGraph = () => {
  const bars = [14, 4, 6, 3, 8, 5, 12, 7, 9, 4, 6, 5, 8, 4, 6, 3, 7, 4, 5, 9, 6, 11, 7, 10, 5, 13];
  return (
    <svg width="72" height="44" viewBox="0 0 72 44" aria-hidden="true">
      <rect width="72" height="44" fill="#000" />
      <path d={`M0 44${bars.map((h, i) => `L${(i * 72) / 25} ${44 - h}`).join('')}L72 44Z`} fill="#0c8a0c" />
    </svg>
  );
};

/* ---------- data ---------- */

const menuGroups: { title: string; items: { label: string; add?: boolean; active?: boolean }[] }[] = [
  { title: 'LOGGING', items: [{ label: 'Change Log' }] },
  { title: 'USERS', items: [{ label: 'Saved Views' }] },
  { title: 'DATA SOURCES', items: [{ label: 'Git Repositories', add: true, active: true }] },
  { title: 'DATA MANAGEMENT', items: [{ label: 'GraphQL Queries', add: true }, { label: 'Notes' }] },
  {
    title: 'AUTOMATION',
    items: ['Config Contexts', 'Config Context Schemas', 'Export Templates', 'External Integrations', 'Webhooks'].map(
      (label) => ({ label, add: true }),
    ),
  },
  { title: 'DATA MODEL', items: [{ label: 'Custom Fields', add: true }] },
];

const provides: { icon: IconName; on: boolean }[] = [
  { icon: 'floorPlan', on: false },
  { icon: 'json', on: false },
  { icon: 'script', on: true },
  { icon: 'databaseExport', on: false },
  { icon: 'graphql', on: true },
  { icon: 'fileCode', on: true },
  { icon: 'fileCode', on: true },
  { icon: 'flask', on: false },
  { icon: 'flask', on: true },
  { icon: 'document', on: true },
  { icon: 'textCheck', on: true },
];

const footerLinks: { icon: IconName; label: string }[] = [
  { icon: 'theme', label: 'Theme' },
  { icon: 'book', label: 'Docs' },
  { icon: 'torii', label: 'Jinja Renderer' },
  { icon: 'cloud', label: 'API' },
  { icon: 'graphql', label: 'GraphQL' },
  { icon: 'xml', label: 'Code' },
  { icon: 'lifebuoy', label: 'Help' },
];

const tabs = [
  { title: 'Git Repositories - Nautobot', icon: <NautobotFavicon>n</NautobotFavicon>, active: true },
  { title: 'aus01-rtr1', icon: <BlackFavicon /> },
  { title: 'raw.githubusercontent.com/alhogan', icon: null },
  { title: 'autocon4-design-workshop', icon: <FaGithub size={32} /> },
];

/* ---------- sections ---------- */

function BrowserHeader() {
  return (
    <>
      <TabStrip>
        <FirefoxView aria-label="Firefox View">
          <svg width="34" height="34" viewBox="0 0 34 34" fill="none" stroke="currentColor" strokeWidth="3" aria-hidden="true">
            <rect x="2" y="11" width="30" height="21" rx="4" />
            <path d="M6 7C6 4 8 3 10 3H24C26 3 28 4 28 7M13 18H21" />
          </svg>
        </FirefoxView>
        <Tabs>
          {tabs.map((t) => (
            <Tab key={t.title} $active={t.active}>
              {t.icon}
              <TabTitle>{t.title}</TabTitle>
              <IconButton aria-label="Close tab"><CloseGlyph /></IconButton>
            </Tab>
          ))}
        </Tabs>
        <IconButton $w={84} aria-label="New tab">
          <svg width="24" height="24" viewBox="0 0 24 24" stroke="currentColor" strokeWidth="3" aria-hidden="true">
            <path d="M12 0V24M0 12H24" />
          </svg>
        </IconButton>
        <WindowControls>
          <IconButton $w={232} aria-label="List all tabs"><Chevron dir="down" size={28} weight={2} /></IconButton>
          <IconButton $w={80} aria-label="Minimize">
            <svg width="16" height="16" viewBox="0 0 16 16" fill="currentColor" aria-hidden="true"><path d="M0 11H16V16H0Z" /></svg>
          </IconButton>
          <IconButton $w={68} aria-label="Maximize">
            <svg width="12" height="12" viewBox="0 0 12 12" fill="none" stroke="currentColor" strokeWidth="4" aria-hidden="true"><path d="M2 2H10V10H2Z" /></svg>
          </IconButton>
          <IconButton $w={82} aria-label="Close window"><CloseGlyph size={16} weight={4} /></IconButton>
        </WindowControls>
      </TabStrip>
      <NavBar>
        <IconButton $w={72} aria-label="Back">
          <svg width="28" height="24" viewBox="0 0 28 24" fill="none" stroke="currentColor" strokeWidth="3" aria-hidden="true"><path d="M28 12H2M13 1 2 12 13 23" /></svg>
        </IconButton>
        <IconButton $w={72} $dim aria-label="Forward">
          <svg width="28" height="24" viewBox="0 0 28 24" fill="none" stroke="currentColor" strokeWidth="3" aria-hidden="true"><path d="M0 12H26M15 1 26 12 15 23" /></svg>
        </IconButton>
        <IconButton $w={72} aria-label="Reload">
          <svg width="30" height="30" viewBox="0 0 30 30" fill="none" stroke="currentColor" strokeWidth="3" aria-hidden="true">
            <path d="M27 15A12.500 12.500 0 1 1 22 5" />
            <path d="M28 0V12H17Z" fill="currentColor" stroke="none" />
          </svg>
        </IconButton>
        <AddressBar>
          <IconButton $w={44} aria-label="Tracking protection">
            <svg width="30" height="34" viewBox="0 0 30 34" fill="none" stroke="currentColor" strokeWidth="2.500" aria-hidden="true">
              <path d="M15 2 27 8C28 20 24 27 15 32 6 27 2 20 3 8Z" strokeLinejoin="round" />
            </svg>
          </IconButton>
          <IconButton $w={68} aria-label="Site information">
            <svg width="24" height="30" viewBox="0 0 24 30" fill="none" stroke="currentColor" strokeWidth="3" aria-hidden="true">
              <path d="M5 2H14L22 10V25Q22 28 19 28H5Q2 28 2 25V5Q2 2 5 2Z" />
              <path d="M13 2V11H22Z" fill="currentColor" stroke="none" />
            </svg>
          </IconButton>
          <Url href="#"><span>http://</span><b>localhost</b>:8001/extras/git-repositories/</Url>
          <IconButton $w={34} aria-label="Bookmark">
            <svg width="34" height="34" viewBox="0 0 34 34" fill="none" stroke="currentColor" strokeWidth="2.500" strokeLinejoin="round" aria-hidden="true">
              <path d="M17 3 21.500 12 31 13.500 24 20.500 25.500 30.500 17 26 8.500 30.500 10 20.500 3 13.500 12.500 12Z" />
            </svg>
          </IconButton>
        </AddressBar>
        <NavRight>
          <SignIn>
            <svg width="34" height="34" viewBox="0 0 34 34" aria-hidden="true">
              <circle cx="17" cy="17" r="15" fill="none" stroke="currentColor" strokeWidth="3" />
              <circle cx="17" cy="13" r="5" fill="currentColor" />
              <path d="M8 20H26C25 26 21 28 17 28S9 26 8 20Z" fill="currentColor" />
            </svg>
            Sign in
            <Dot />
          </SignIn>
          <IconButton $w={56} aria-label="Extensions">
            <svg width="32" height="34" viewBox="0 0 32 34" fill="none" stroke="currentColor" strokeWidth="3" strokeLinejoin="round" aria-hidden="true">
              <path d="M4 11H12V5Q12 2 15 2T18 5V11H28V32H4V25H7Q11 25 11 21T7 17H4Z" />
            </svg>
          </IconButton>
          <IconButton $w={56} aria-label="Menu">
            <svg width="24" height="22" viewBox="0 0 24 22" stroke="currentColor" strokeWidth="3" aria-hidden="true"><path d="M0 2H24M0 11H24M0 20H24" /></svg>
          </IconButton>
        </NavRight>
      </NavBar>
    </>
  );
}

function Sidebar() {
  return (
    <SidebarShell>
      <SidebarScroll>
        <SidebarMenus>
          <MenuButton><TripleArrow width={34} height={14} weight={3} />JOBS<Chevron dir="down" /></MenuButton>
          <MenuButton $active><TripleArrow width={34} height={14} weight={3} />EXTENSIBILITY<Chevron dir="up" /></MenuButton>
          <MenuPanel>
            {menuGroups.map((g) => (
              <MenuGroup key={g.title}>
                <GroupTitle>{g.title}</GroupTitle>
                {g.items.map((item) => (
                  <MenuItem key={item.label} $active={item.active}>
                    <a href="#">{item.label}</a>
                    {item.add && <AddButton aria-label={`Add ${item.label}`}><Icon name="plus" size={37} /></AddButton>}
                  </MenuItem>
                ))}
              </MenuGroup>
            ))}
          </MenuPanel>
        </SidebarMenus>
      </SidebarScroll>
      <CollapseButton aria-label="Collapse sidebar"><Chevron dir="left" size={18} /></CollapseButton>
    </SidebarShell>
  );
}

function RepositoryTable() {
  return (
    <TableCard>
      <Table>
        <colgroup>
          <Col $w={68} /><Col $w={306} /><Col /><Col $w={132} /><Col $w={823} /><Col $w={193} /><Col $w={252} />
        </colgroup>
        <thead>
          <tr>
            <th><Checkbox aria-label="Select all" /></th>
            <th><a href="#">Name</a></th>
            <th><a href="#">Remote URL</a></th>
            <th><a href="#">Branch</a></th>
            <th><a href="#">Provides</a></th>
            <th><a href="#">Sync Status</a></th>
            <th aria-label="Actions" />
          </tr>
        </thead>
        <tbody>
          <tr>
            <td><Checkbox aria-label="Select Design Workshop Repo" /></td>
            <td><RepoLink href="#">Design Workshop Repo</RepoLink></td>
            <td>https://github.com/alhogan/autocon4-design-workshop.git</td>
            <td>main</td>
            <td>
              <IconRow $gap={6}>
                {provides.map((p, i) => (
                  <ProvidesBadge key={i} $on={p.on}><Icon name={p.icon} size={36} /></ProvidesBadge>
                ))}
              </IconRow>
            </td>
            <td><StatusBadge>Completed</StatusBadge></td>
            <td>
              <IconRow $gap={7}>
                <RowAction $bg="#0567cf" aria-label="Sync">
                  <Icon name="branchSync" />
                  <Tooltip role="tooltip">Sync</Tooltip>
                </RowAction>
                <RowAction $bg="#f6faff" $fg="#3390f0" $border="#3d93ee" aria-label="History"><Icon name="history" /></RowAction>
                <RowAction $bg="#ff8504" aria-label="Edit"><Icon name="pencil" size={36} /></RowAction>
                <RowAction $bg="#e8161c" aria-label="Delete"><Icon name="trash" /></RowAction>
              </IconRow>
            </td>
          </tr>
        </tbody>
      </Table>
    </TableCard>
  );
}

function MainColumn() {
  return (
    <Main>
      <Content>
        <Banner>Local</Banner>
        <SearchRow>
          <Breadcrumb aria-label="Breadcrumb"><a href="#">Git Repositories</a></Breadcrumb>
          <SearchForm>
            <SearchInput type="text" aria-label="Search" placeholder="Search Git Repositories" />
            <SearchButton type="button" aria-label="Search"><Icon name="magnify" size={38} /></SearchButton>
          </SearchForm>
        </SearchRow>
        <ActionBar>
          <OutlineButton><Icon name="cog" size={36} />Configure</OutlineButton>
          <OutlineButton><Icon name="filter" size={36} />Filter</OutlineButton>
          <OutlineButton><Icon name="savedViews" size={36} />Saved Views<Caret /></OutlineButton>
          <SplitButton>
            <SplitMain><Icon name="plus" size={36} />Add Git Repository</SplitMain>
            <SplitToggle aria-label="More add options"><Caret /></SplitToggle>
          </SplitButton>
        </ActionBar>
        <TitleRow>
          <TripleArrow width={68} height={26} weight={2} />
          <Title>Git Repositories</Title>
        </TitleRow>
        <RepositoryTable />
        <BelowTable>
          <EditSelected><Icon name="pencil" size={32} />Edit Selected<Caret up /></EditSelected>
          <Paging>
            <PageSizeLabel>
              <SelectBox>
                <PageSize defaultValue="50"><option>50</option><option>100</option></PageSize>
                <Chevron dir="down" size={18} />
              </SelectBox>
              per page
            </PageSizeLabel>
            <Muted>Showing 1-1 of 1</Muted>
          </Paging>
        </BelowTable>
      </Content>
      <Footer>
        <span>8a012fa4843c (v2.4.8)</span>
        <span>2025-11-17 08:46:39 UTC</span>
        <FooterLinks>
          {footerLinks.map((l, i) => (
            <React.Fragment key={l.label}>
              {i > 0 && <span>·</span>}
              <FooterLink href="#"><Icon name={l.icon} size={36} />{l.label}</FooterLink>
            </React.Fragment>
          ))}
        </FooterLinks>
      </Footer>
    </Main>
  );
}

function DesktopTaskbar() {
  return (
    <TaskBar>
      <Launchers>
        <svg width="58" height="46" viewBox="0 0 58 46" fill="#b9b9b9" aria-hidden="true">
          <path d="M0 26C14 20 22 8 42 0L38 6C46 14 54 30 57 46 52 42 44 22 36 14 28 20 18 34 8 45L22 24C16 28 12 32 8 36L20 20C12 24 6 26 0 26Z" />
          <path d="M42 0 36 12C30 12 20 18 10 22 22 16 30 4 42 0Z" fill="#e8e8e8" />
        </svg>
        <svg width="32" height="40" viewBox="0 0 32 40" aria-hidden="true">
          <rect width="32" height="40" rx="4" fill="#262626" />
          <rect x="2" y="2" width="28" height="12" fill="#3a3a3a" />
          <path d="M5 16H22L28 26H5Z" fill="#f2f2f2" />
        </svg>
        <svg width="40" height="40" viewBox="0 0 40 40" aria-hidden="true">
          <circle cx="20" cy="20" r="19" fill="#5f93cc" />
          <path d="M10 8 20 5 24 12 18 20 8 22 6 15ZM24 14 34 12 36 22 30 32 24 28ZM12 24 20 25 18 36 12 32Z" fill="#b9d3ec" />
        </svg>
        <svg width="40" height="36" viewBox="0 0 40 36" aria-hidden="true">
          <path d="M11 9H39V35H11Z" fill="#e9e8e2" /><path d="M11 9H39V13H11Z" fill="#3b78bd" />
          <path d="M1 1H29V27H1Z" fill="#f1f0ea" stroke="#8c8c86" /><path d="M1 1H29V6H1Z" fill="#3b78bd" />
        </svg>
      </Launchers>
      <Workspace $active aria-label="Workspace 1"><Firefox /></Workspace>
      <Workspace aria-label="Workspace 2" />
      <Tasks>
        <Task><VsCode />arista_eos.j2 - a...</Task>
        <Task><VsCode />test_ping.yaml - ...</Task>
        <Task $active><Firefox />Git Repositories ...</Task>
      </Tasks>
      <Tray>
        <LoadGraph />
        <svg width="36" height="34" viewBox="0 0 36 34" fill="#0c0c0c" stroke="#0c0c0c" strokeWidth="2" aria-hidden="true">
          <path d="M1 12H6L16 2V32L6 22H1Z" />
          <path d="M21 11Q25 17 21 23M26 8Q32 17 26 26M31 6Q39 17 31 28" fill="none" />
        </svg>
        <ClipboardIcon>P</ClipboardIcon>
        <svg width="44" height="38" viewBox="0 0 44 38" aria-hidden="true">
          <path d="M14 1H43V22H14Z" fill="#d8d8d4" /><path d="M17 4H40V18H17Z" fill="#2f5fa8" />
          <path d="M1 11H30V30H1Z" fill="#e4e4e0" /><path d="M4 14H27V26H4Z" fill="#2f5fa8" />
          <path d="M1 33H28V37H1Z" fill="#d8d8d4" />
          <path d="M28 23H43V37H28Z" fill="#b4b4b0" /><path d="M32 26 39 34M39 26 32 34" stroke="#333" strokeWidth="3" />
        </svg>
        <Language>EN</Language>
        <Clock>08:46</Clock>
        <svg width="42" height="42" viewBox="0 0 42 42" aria-hidden="true">
          <path d="M1 1H41V31H1Z" fill="#cfcbd4" /><path d="M3 3H39V26H3Z" fill="#6b5a7c" />
          <path d="M14 13H28V24H14Z" fill="#e3b643" /><path d="M17 13V9Q17 6 21 6T25 9V13" fill="none" stroke="#d8d8d8" strokeWidth="2" />
          <path d="M17 31H25V36Q30 37 30 39T21 41 12 39 17 36Z" fill="#e6e6e6" />
        </svg>
        <svg width="34" height="36" viewBox="0 0 34 36" fill="none" stroke="#fff" strokeWidth="4" strokeLinecap="round" aria-hidden="true">
          <rect x="1" y="1" width="32" height="34" rx="3" fill="#dd2a32" stroke="#ef7479" strokeWidth="1" />
          <path d="M17 8V17M11 12A9 9 0 1 0 23 12" />
        </svg>
      </Tray>
    </TaskBar>
  );
}

export default function App() {
  return (
    <>
      <GlobalStyle />
      <Desktop>
        <Browser>
          <BrowserHeader />
          <Page>
            <Sidebar />
            <MainColumn />
            <DebugHandle>
              <DebugButton aria-label="Show debug toolbar"><span>D</span><small>J</small>DT</DebugButton>
            </DebugHandle>
            <HorizontalScrollbar />
          </Page>
        </Browser>
        <DesktopTaskbar />
      </Desktop>
    </>
  );
}
